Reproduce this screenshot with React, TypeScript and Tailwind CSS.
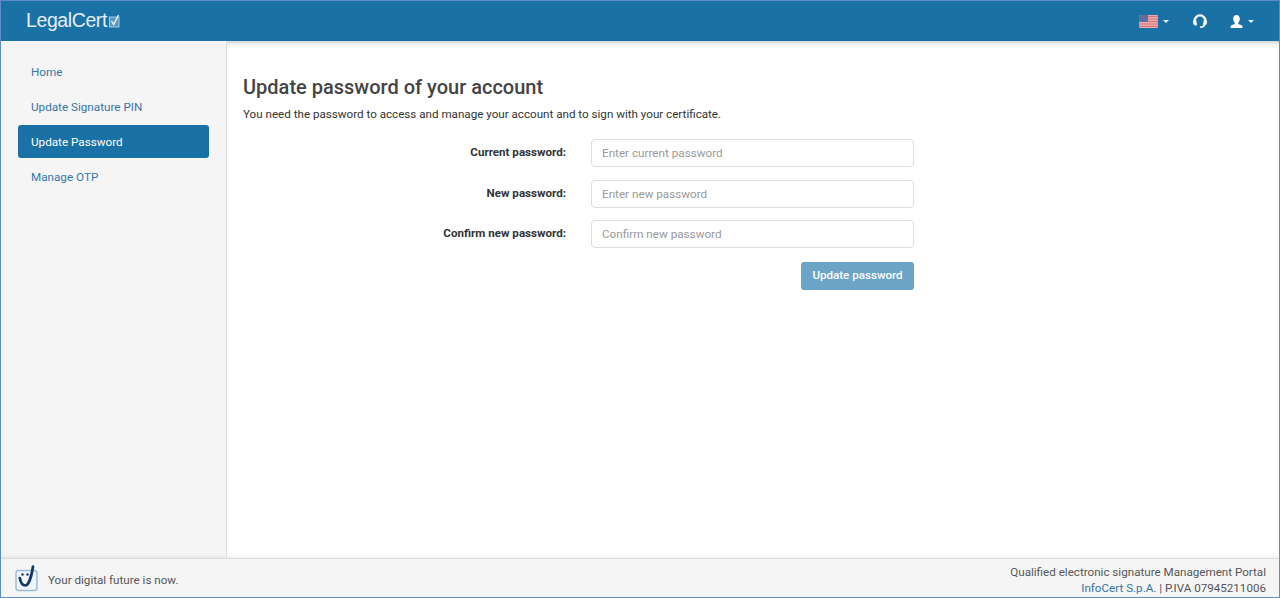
const roboto = "font-['Roboto',sans-serif]"

function Caret() {
  return <span className="ml-[5px] inline-block h-0 w-0 border-x-[3px] border-t-[3px] border-x-transparent border-t-white/90" />
}

function FlagUS() {
  return (
    <svg width="19" height="13" viewBox="0 0 19 13" aria-hidden>
      <rect width="19" height="13" rx="1" fill="#e9a9ad" />
      <path d="M0 1.500h19M0 4h19M0 6.500h19M0 9h19M0 11.500h19" stroke="#d9707a" strokeWidth="1" />
      <rect width="9" height="7" rx="1" fill="#5f6d9f" />
    </svg>
  )
}

function Headset() {
  return (
    <svg width="14" height="14" viewBox="0 0 14 14" fill="none" aria-hidden>
      <path d="M3.500 11.200A5.500 5.500 0 1 1 10.500 11.200" stroke="#fff" strokeWidth="2.300" />
      <rect x="0.200" y="5.800" width="3.300" height="5" rx="1.400" fill="#fff" />
      <rect x="10.500" y="5.800" width="3.300" height="5" rx="1.400" fill="#fff" />
      <path d="M11.800 10c-.3 2.300-2 3.200-4.600 3.200" stroke="#fff" strokeWidth="1.700" />
    </svg>
  )
}

function UserGlyph() {
  return (
    <svg width="13" height="13" viewBox="0 0 13 13" aria-hidden>
      <path d="M6.500 0c2 0 3.300 1.500 3.300 3.700 0 1.800-.8 3.200-1.500 4v1.200c1.400.6 4.200 1 4.200 2.900V13H.5v-1.200c0-1.900 2.800-2.300 4.200-2.900V7.700c-.7-.8-1.500-2.200-1.500-4C3.200 1.500 4.500 0 6.500 0z" fill="#fff" />
    </svg>
  )
}

function LogoCheck() {
  return (
    <svg width="11" height="14" viewBox="0 0 11 14" fill="none" aria-hidden className="ml-[2px]">
      <rect x="0.500" y="3" width="9.500" height="10" stroke="#a9cbe0" strokeWidth="1" fill="#5a9ac0" />
      <path d="M2.500 7l2.200 3.500L9.500 1" stroke="#fff" strokeWidth="1.200" />
    </svg>
  )
}

function FooterLogo() {
  return (
    <svg width="24" height="27" viewBox="0 0 24 27" fill="none" aria-hidden>
      <rect x="1" y="5.500" width="21" height="20" rx="2.500" fill="#eef4fa" stroke="#9dbfdc" strokeWidth="1.500" />
      <circle cx="7.500" cy="9.500" r="1.200" fill="#12386b" />
      <circle cx="12.500" cy="9.500" r="1.200" fill="#12386b" />
      <path d="M4.800 13c.8 4 3 7.500 5.500 7.500 3.200 0 6.200-9 7.700-19" stroke="#12386b" strokeWidth="2.700" strokeLinecap="round" />
    </svg>
  )
}

function Field({ label, placeholder }: { label: string; placeholder: string }) {
  return (
    <div className="flex items-center">
      <label className="w-[348px] pr-[25px] text-right text-[11.6px] font-bold text-[#333]">{label}</label>
      <input
        type="password"
        placeholder={placeholder}
        className="h-[28px] w-[323px] rounded-[4px] border border-[#ddd] bg-white px-[10px] text-[11.7px] outline-none placeholder:text-[#999]"
      />
    </div>
  )
}

const links = ['Home', 'Update Signature PIN', 'Update Password', 'Manage OTP']

export default function App() {
  return (
    <div className={`${roboto} flex h-[598px] w-[1280px] flex-col overflow-hidden border border-[#5f8bc9] bg-white text-[#333]`}>
      <header className="relative z-10 flex h-[40px] shrink-0 items-center bg-[#1a71a6] pl-[25px] pr-[25px]">
        <div className="flex items-center">
          <span className="font-['Liberation_Sans',sans-serif] text-[19.500px] tracking-[-0.4px] text-[#e3eef5]">LegalCert</span>
          <LogoCheck />
        </div>
        <div className="ml-auto flex items-center">
          <span className="flex items-center"><FlagUS /><Caret /></span>
          <span className="ml-[24px] flex items-center"><Headset /></span>
          <span className="ml-[23px] flex items-center"><UserGlyph /><Caret /></span>
        </div>
      </header>

      <div className="flex min-h-0 flex-1">
        <aside className="flex w-[226px] shrink-0 flex-col gap-[2px] border-r border-[#ddd] bg-[#f5f5f5] px-[17px] pt-[14px]">
          {links.map((l) => (
            <a
              key={l}
              className={
                l === 'Update Password'
                  ? 'flex h-[33px] items-center rounded-[3px] bg-[#1a71a6] pl-[13px] pt-[2px] text-[11.700px] text-white'
                  : 'flex h-[33px] items-center pl-[13px] pt-[2px] text-[11.700px] text-[#3577a8]'
              }
            >
              {l}
            </a>
          ))}
        </aside>
        <main className="flex-1 pl-[16px] pt-[34px] shadow-[inset_0_5px_4px_-3px_rgba(0,0,0,0.2)]">
          <h1 className="text-[20px] font-medium leading-[24px] text-[#444]">Update password of your account</h1>
          <p className="mt-[7px] text-[11.630px] leading-[17px]">You need the password to access and manage your account and to sign with your certificate.</p>
          <form className="mt-[16px] flex w-[671px] flex-col gap-[12.500px]">
            <Field label="Current password:" placeholder="Enter current password" />
            <Field label="New password:" placeholder="Enter new password" />
            <Field label="Confirm new password:" placeholder="Confirm new password" />
            <div className="mt-[1.500px] flex justify-end">
              <button type="button" className="h-[28px] w-[113px] rounded-[3px] bg-[#6ba4c6] text-[11.600px] font-medium text-white">Update password</button>
            </div>
          </form>
        </main>
      </div>

      <footer className="relative z-10 flex h-[39px] shrink-0 items-center justify-between border-t border-[#ddd] bg-[#f5f5f5] pl-[14px] pr-[13px] text-[11.640px] text-[#555] shadow-[0_-1px_3px_rgba(0,0,0,0.08)]">
        <div className="flex items-center gap-[9px]">
          <FooterLogo />
          <span className="mt-[6px]">Your digital future is now.</span>
        </div>
        <div className="mt-[3px] text-right leading-[16px]">
          <div>Qualified electronic signature Management Portal</div>
          <div><span className="text-[#3577a8]">InfoCert S.p.A.</span> | P.IVA 07945211006</div>
        </div>
      </footer>
    </div>
  )
}
